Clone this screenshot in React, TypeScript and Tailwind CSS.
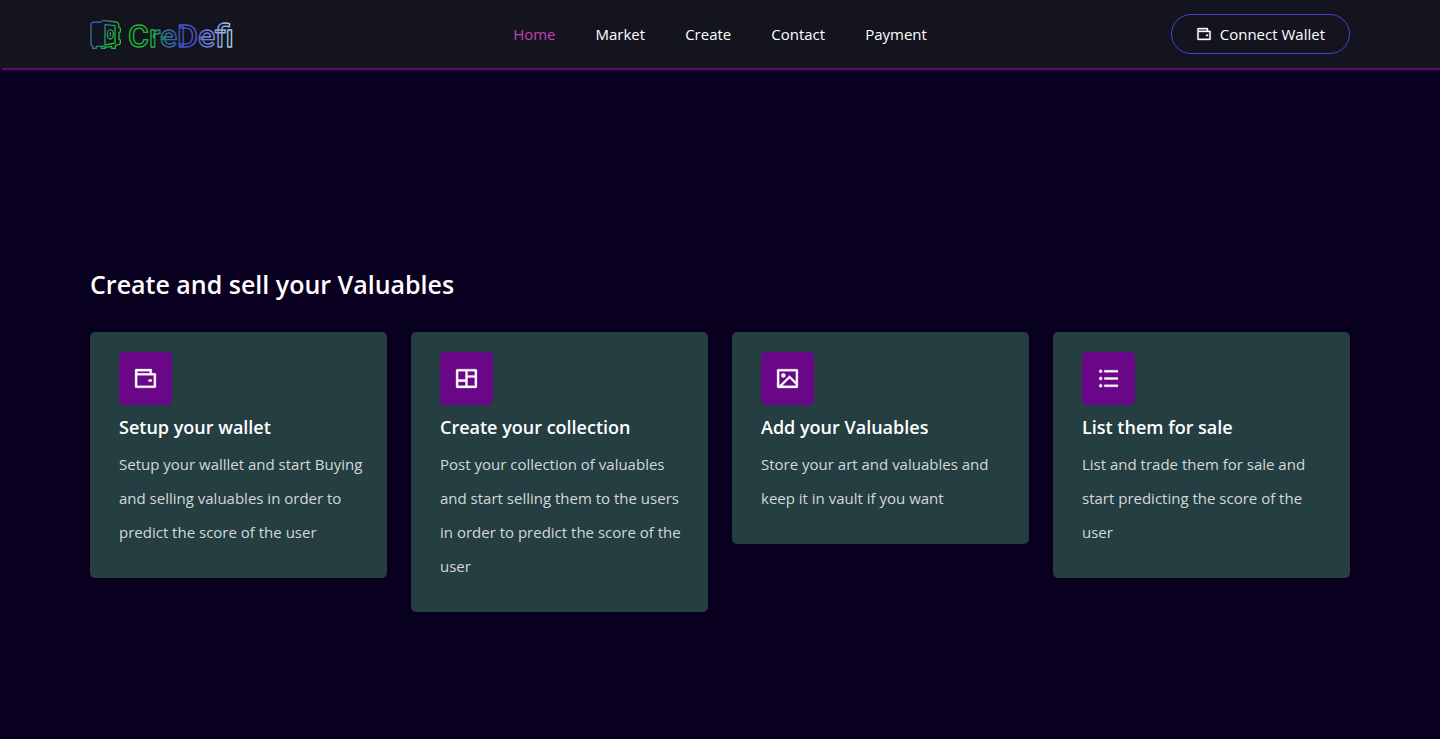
import type { IconType } from 'react-icons';
import { RiImageLine, RiLayoutMasonryLine, RiListUnordered, RiWalletLine } from 'react-icons/ri';

const NAV_LINKS = [
  { label: 'Home', url: '#home' },
  { label: 'Market', url: '#market' },
  { label: 'Create', url: '#create' },
  { label: 'Contact', url: '#contact' },
  { label: 'Payment', url: '#payment' },
];

interface Step {
  title: string;
  desc: string;
  icon: IconType;
}

const STEPS: Step[] = [
  {
    title: 'Setup your wallet',
    desc: 'Setup your walllet and start Buying and selling valuables in order to predict the score of the user',
    icon: RiWalletLine,
  },
  {
    title: 'Create your collection',
    desc: 'Post your collection of valuables and start selling them to the users in order to predict the score of the user',
    icon: RiLayoutMasonryLine,
  },
  {
    title: 'Add your Valuables',
    desc: 'Store your art and valuables and keep it in vault if you want',
    icon: RiImageLine,
  },
  {
    title: 'List them for sale',
    desc: 'List and trade them for sale and start predicting the score of the user',
    icon: RiListUnordered,
  },
];

function Logo() {
  return (
    <svg
      viewBox="30 30 432 96"
      className="h-8 w-36 overflow-visible"
      fill="none"
      strokeWidth="4"
      strokeLinejoin="round"
      role="img"
      aria-label="CreDefi"
    >
      <defs>
        <linearGradient id="vault" gradientUnits="userSpaceOnUse" x1="32" y1="40" x2="112" y2="84">
          <stop offset="0" stopColor="#4054d0" />
          <stop offset="0.5" stopColor="#2f7f86" />
          <stop offset="1" stopColor="#1fc02c" />
        </linearGradient>
        <linearGradient id="word" gradientUnits="userSpaceOnUse" x1="146" y1="0" x2="460" y2="0">
          <stop offset="0" stopColor="#1fc02c" />
          <stop offset="0.2" stopColor="#22ae38" />
          <stop offset="0.38" stopColor="#326c9c" />
          <stop offset="0.58" stopColor="#4848d0" />
          <stop offset="0.8" stopColor="#7a8ee0" />
          <stop offset="1" stopColor="#a8d4ec" />
        </linearGradient>
      </defs>
      <g stroke="url(#vault)">
        <path d="M66 42L38 43L33 47V112L38 114V121H49V115H64V121H76V116" />
        <path d="M66 37L110 42L116 47V58L121 60V72L117 74V94L121 96V107L115 110L106 112V121H95V115L76 118L66 113" />
        <path d="M75 50L105 53V105L75 111Z" />
        <ellipse cx="91" cy="79" rx="9" ry="14" />
        <path d="M91 73V85" />
      </g>
      <text x="144" y="116" fontSize="96" stroke="url(#word)" className="font-['Roboto',sans-serif] font-medium">
        CreDefi
      </text>
    </svg>
  );
}

function Header() {
  return (
    <header className="bg-[#14141f] shadow-[2px_2px_2px_#6b1270]">
      <div className="mx-auto grid h-17 max-w-[1308px] grid-cols-[1fr_auto_1fr] items-center px-6">
        <a href="#home" className="justify-self-start">
          <Logo />
        </a>
        <nav>
          <ul className="flex items-center gap-10 text-[15px]">
            {NAV_LINKS.map((link, i) => (
              <li key={link.url}>
                <a href={link.url} className={i === 0 ? 'text-[#c040b8]' : 'font-medium text-white'}>
                  {link.label}
                </a>
              </li>
            ))}
          </ul>
        </nav>
        <button
          type="button"
          className="flex h-10 items-center gap-2 justify-self-end rounded-full border border-[#4b40d0] px-6 text-[15px] font-medium text-white"
        >
          <RiWalletLine size={16} strokeWidth={0.5} />
          Connect Wallet
        </button>
      </div>
    </header>
  );
}

function StepCard({ title, desc, icon: Icon }: Step) {
  return (
    <div className="rounded-[5px] bg-[#243e42] pt-5 pr-5 pb-[29px] pl-[29px]">
      <span className="flex size-[53px] items-center justify-center rounded-[5px] bg-[#6a0788] text-white">
        <Icon size={25} strokeWidth={0.3} />
      </span>
      <h3 className="mt-2 text-lg leading-7 font-semibold text-white">{title}</h3>
      <p className="mt-1.5 text-[15px] leading-[34px] text-[#d3d8d9]">{desc}</p>
    </div>
  );
}

export default function App() {
  return (
    <div className="min-h-screen bg-[#090020] font-['Open_Sans','Noto_Sans',sans-serif]">
      <Header />
      <section className="mx-auto max-w-[1308px] px-6 pt-48 pb-32">
        <h2 className="mb-6 text-[25px] leading-12 font-semibold text-white">Create and sell your Valuables</h2>
        <div className="grid grid-cols-1 items-start gap-6 sm:grid-cols-2 lg:grid-cols-4">
          {STEPS.map((step) => (
            <StepCard key={step.title} {...step} />
          ))}
        </div>
      </section>
    </div>
  );
}
